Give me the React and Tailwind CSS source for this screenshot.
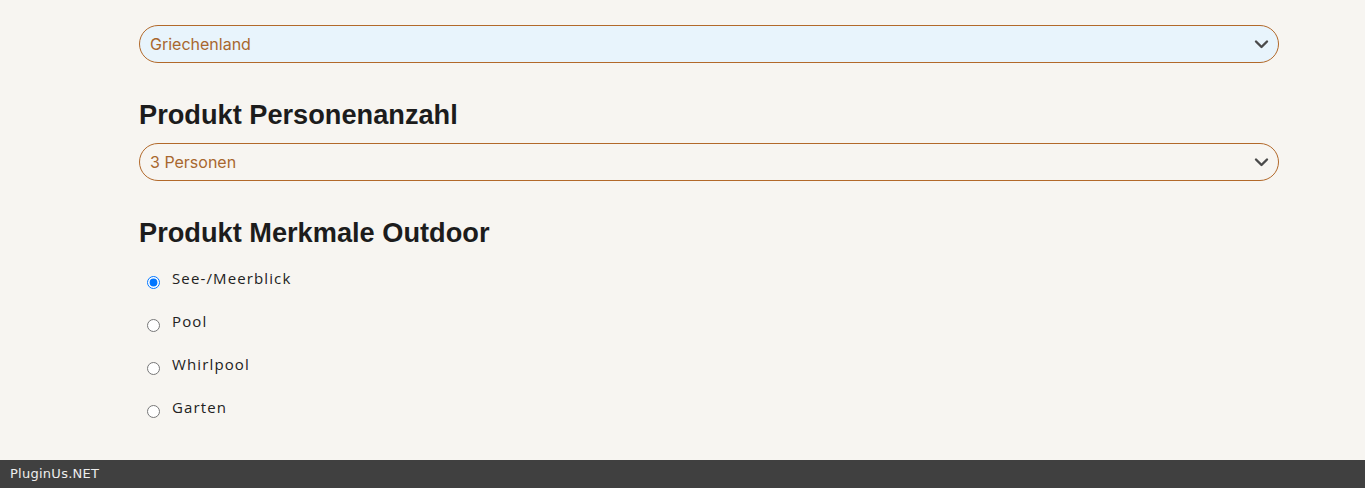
import React from "react";

const Chevron = () => (
  <svg width="15" height="10" viewBox="0 0 15 10" fill="none">
    <path d="M2 2.5 L7.5 8 L13 2.5" stroke="#4a4a4a" strokeWidth="2.4" strokeLinecap="round" strokeLinejoin="round" />
  </svg>
);

const FakeSelect = ({ value, filled }) => (
  <div
    className={`h-[38px] w-[1140px] rounded-full border border-[#b2692a] flex items-center justify-between pl-[10px] pr-[9px] ${
      filled ? "bg-[#e8f4fc]" : "bg-transparent"
    }`}
  >
    <span className="text-[16px] text-[#a8672e] font-['Inter',sans-serif]">{value}</span>
    <Chevron />
  </div>
);

const options = ["See-/Meerblick", "Pool", "Whirlpool", "Garten"];

export default function App() {
  return (
    <div className="h-[488px] flex flex-col bg-[#f7f5f1]">
      <main className="flex-1 pl-[139px] pt-[25px]">
        <FakeSelect value="Griechenland" filled />

        <h2 className="mt-[36px] mb-[12px] text-[27.2px] leading-[32px] font-bold text-[#1c1c1c] font-['Liberation_Sans',Arial,sans-serif]">
          Produkt Personenanzahl
        </h2>
        <FakeSelect value="3 Personen" />

        <h2 className="mt-[36px] mb-[19px] text-[27.2px] leading-[32px] font-bold text-[#1c1c1c] font-['Liberation_Sans',Arial,sans-serif]">
          Produkt Merkmale Outdoor
        </h2>

        {/* Radio list */}
        <div className="flex flex-col gap-[22px] pl-[8px]">
          {options.map((o, i) => (
            <label key={o} className="flex items-start gap-[12px]">
              <input type="radio" name="outdoor" defaultChecked={i === 0} className="m-0 mt-[8px] w-[13px] h-[13px]" />
              <span className="text-[15px] leading-[20px] tracking-[0.075em] text-[#222] font-['Open_Sans',sans-serif]">
                {o}
              </span>
            </label>
          ))}
        </div>
      </main>

      <footer className="h-[28px] bg-[#404040] flex items-center px-[10px]">
        <span className="text-[13px] tracking-[0.02em] text-[#eee] font-['DejaVu_Sans',sans-serif]">PluginUs.NET</span>
      </footer>
    </div>
  );
}
